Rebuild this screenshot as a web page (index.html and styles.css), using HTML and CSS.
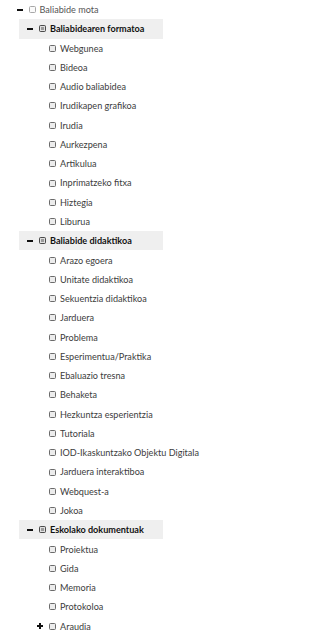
FILE: index.html
```html
<!DOCTYPE html>
<html lang="eu">
<head>
<meta charset="utf-8">
<title>Baliabide mota</title>
<link rel="stylesheet" href="styles.css">
</head>
<body>
<ul class="tree">
  <li>
    <div class="row lvl0"><span class="tog minus"></span><span class="cb cb-top"></span><span class="lbl">Baliabide mota</span></div>
    <ul>
      <li>
        <div class="row lvl1 head"><span class="tog minus"></span><span class="cb cb-head"></span><span class="lbl">Baliabidearen formatoa</span></div>
        <ul>
          <li><div class="row lvl2"><span class="tog"></span><span class="cb"></span><span class="lbl">Webgunea</span></div></li>
          <li><div class="row lvl2"><span class="tog"></span><span class="cb"></span><span class="lbl">Bideoa</span></div></li>
          <li><div class="row lvl2"><span class="tog"></span><span class="cb"></span><span class="lbl">Audio baliabidea</span></div></li>
          <li><div class="row lvl2"><span class="tog"></span><span class="cb"></span><span class="lbl">Irudikapen grafikoa</span></div></li>
          <li><div class="row lvl2"><span class="tog"></span><span class="cb"></span><span class="lbl">Irudia</span></div></li>
          <li><div class="row lvl2"><span class="tog"></span><span class="cb"></span><span class="lbl">Aurkezpena</span></div></li>
          <li><div class="row lvl2"><span class="tog"></span><span class="cb"></span><span class="lbl">Artikulua</span></div></li>
          <li><div class="row lvl2"><span class="tog"></span><span class="cb"></span><span class="lbl">Inprimatzeko fitxa</span></div></li>
          <li><div class="row lvl2"><span class="tog"></span><span class="cb"></span><span class="lbl">Hiztegia</span></div></li>
          <li><div class="row lvl2"><span class="tog"></span><span class="cb"></span><span class="lbl">Liburua</span></div></li>
        </ul>
      </li>
      <li>
        <div class="row lvl1 head"><span class="tog minus"></span><span class="cb cb-head"></span><span class="lbl">Baliabide didaktikoa</span></div>
        <ul>
          <li><div class="row lvl2"><span class="tog"></span><span class="cb"></span><span class="lbl">Arazo egoera</span></div></li>
          <li><div class="row lvl2"><span class="tog"></span><span class="cb"></span><span class="lbl">Unitate didaktikoa</span></div></li>
          <li><div class="row lvl2"><span class="tog"></span><span class="cb"></span><span class="lbl">Sekuentzia didaktikoa</span></div></li>
          <li><div class="row lvl2"><span class="tog"></span><span class="cb"></span><span class="lbl">Jarduera</span></div></li>
          <li><div class="row lvl2"><span class="tog"></span><span class="cb"></span><span class="lbl">Problema</span></div></li>
          <li><div class="row lvl2"><span class="tog"></span><span class="cb"></span><span class="lbl">Esperimentua/Praktika</span></div></li>
          <li><div class="row lvl2"><span class="tog"></span><span class="cb"></span><span class="lbl">Ebaluazio tresna</span></div></li>
          <li><div class="row lvl2"><span class="tog"></span><span class="cb"></span><span class="lbl">Behaketa</span></div></li>
          <li><div class="row lvl2"><span class="tog"></span><span class="cb"></span><span class="lbl">Hezkuntza esperientzia</span></div></li>
          <li><div class="row lvl2"><span class="tog"></span><span class="cb"></span><span class="lbl">Tutoriala</span></div></li>
          <li><div class="row lvl2"><span class="tog"></span><span class="cb"></span><span class="lbl">IOD-Ikaskuntzako Objektu Digitala</span></div></li>
          <li><div class="row lvl2"><span class="tog"></span><span class="cb"></span><span class="lbl">Jarduera interaktiboa</span></div></li>
          <li><div class="row lvl2"><span class="tog"></span><span class="cb"></span><span class="lbl">Webquest-a</span></div></li>
          <li><div class="row lvl2"><span class="tog"></span><span class="cb"></span><span class="lbl">Jokoa</span></div></li>
        </ul>
      </li>
      <li>
        <div class="row lvl1 head"><span class="tog minus"></span><span class="cb cb-head"></span><span class="lbl">Eskolako dokumentuak</span></div>
        <ul>
          <li><div class="row lvl2"><span class="tog"></span><span class="cb"></span><span class="lbl">Proiektua</span></div></li>
          <li><div class="row lvl2"><span class="tog"></span><span class="cb"></span><span class="lbl">Gida</span></div></li>
          <li><div class="row lvl2"><span class="tog"></span><span class="cb"></span><span class="lbl">Memoria</span></div></li>
          <li><div class="row lvl2"><span class="tog"></span><span class="cb"></span><span class="lbl">Protokoloa</span></div></li>
          <li><div class="row lvl2"><span class="tog plus"></span><span class="cb"></span><span class="lbl">Araudia</span></div></li>
        </ul>
      </li>
    </ul>
  </li>
</ul>
</body>
</html>
```
FILE: styles.css
```css
html, body {
  margin: 0;
  padding: 0;
  background: #ffffff;
}
body {
  font-family: Lato, "Open Sans", "Liberation Sans", sans-serif;
  font-size: 9.1px;
  color: #3c3c3c;
}
.tree, .tree ul {
  list-style: none;
  margin: 0;
  padding: 0;
}
.row {
  display: flex;
  align-items: center;
  height: 19.28px;
  box-sizing: border-box;
  white-space: nowrap;
}
.lvl0 { padding-left: 17px; }
.lvl1 { padding-left: 27px; }
.lvl2 { padding-left: 37px; }
.head {
  margin-left: 19px;
  padding-left: 8px;
  width: 144px;
  background: #efefef;
}
.tog {
  flex: 0 0 12px;
  height: 7px;
  position: relative;
}
.minus::before {
  content: "";
  position: absolute;
  left: 0;
  top: 2.5px;
  width: 5.5px;
  height: 2px;
  background: #111;
}
.plus::before, .plus::after {
  content: "";
  position: absolute;
  background: #111;
}
.plus::before {
  left: 0;
  top: 2.5px;
  width: 6px;
  height: 2px;
}
.plus::after {
  left: 2px;
  top: 0.5px;
  width: 2px;
  height: 6px;
}
.cb {
  flex: 0 0 auto;
  width: 7px;
  height: 7px;
  box-sizing: border-box;
  border: 1px solid #6b6b6b;
  border-radius: 1.5px;
  background: #ececec;
  margin-right: 4px;
}
.cb-top {
  border-color: #a8a8a8;
  background: #fafafa;
  margin-right: 3.5px;
}
.cb-head {
  border-color: #4a4a4a;
  background: #9a9a9a;
  box-shadow: inset 0 0 0 1px #e0e0e0;
}
.lbl {
  line-height: 1;
}
.head .lbl {
  color: #111;
  font-weight: 700;
}
.lvl0 .lbl {
  color: #555;
}
```
